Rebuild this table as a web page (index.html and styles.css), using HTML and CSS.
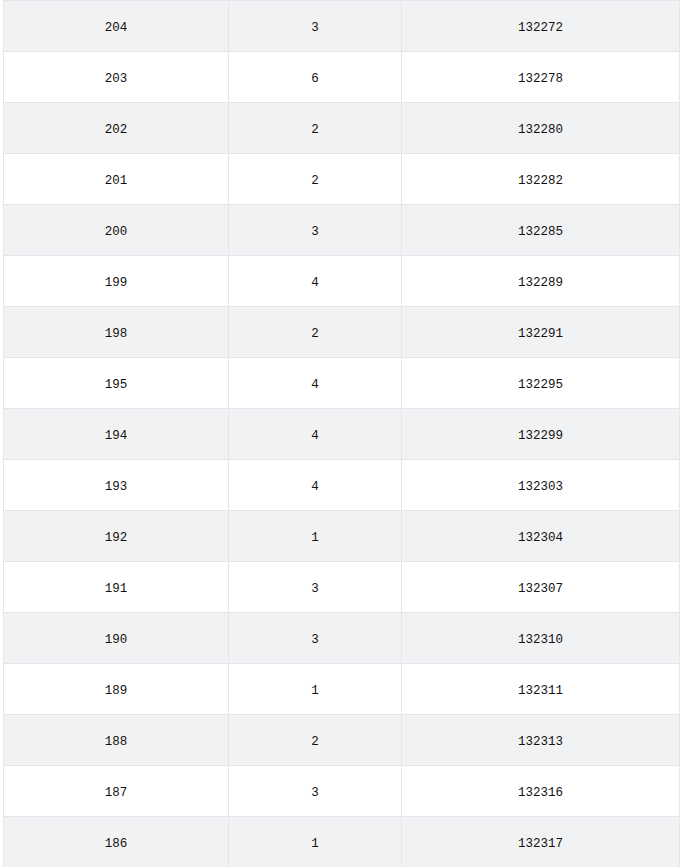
FILE: index.html
```html
<!DOCTYPE html>
<html>
<head>
<meta charset="utf-8">
<link rel="stylesheet" href="styles.css">
</head>
<body>
<div class="table">
  <div class="row"><div class="cell">204</div><div class="cell">3</div><div class="cell">132272</div></div>
  <div class="row"><div class="cell">203</div><div class="cell">6</div><div class="cell">132278</div></div>
  <div class="row"><div class="cell">202</div><div class="cell">2</div><div class="cell">132280</div></div>
  <div class="row"><div class="cell">201</div><div class="cell">2</div><div class="cell">132282</div></div>
  <div class="row"><div class="cell">200</div><div class="cell">3</div><div class="cell">132285</div></div>
  <div class="row"><div class="cell">199</div><div class="cell">4</div><div class="cell">132289</div></div>
  <div class="row"><div class="cell">198</div><div class="cell">2</div><div class="cell">132291</div></div>
  <div class="row"><div class="cell">195</div><div class="cell">4</div><div class="cell">132295</div></div>
  <div class="row"><div class="cell">194</div><div class="cell">4</div><div class="cell">132299</div></div>
  <div class="row"><div class="cell">193</div><div class="cell">4</div><div class="cell">132303</div></div>
  <div class="row"><div class="cell">192</div><div class="cell">1</div><div class="cell">132304</div></div>
  <div class="row"><div class="cell">191</div><div class="cell">3</div><div class="cell">132307</div></div>
  <div class="row"><div class="cell">190</div><div class="cell">3</div><div class="cell">132310</div></div>
  <div class="row"><div class="cell">189</div><div class="cell">1</div><div class="cell">132311</div></div>
  <div class="row"><div class="cell">188</div><div class="cell">2</div><div class="cell">132313</div></div>
  <div class="row"><div class="cell">187</div><div class="cell">3</div><div class="cell">132316</div></div>
  <div class="row"><div class="cell">186</div><div class="cell">1</div><div class="cell">132317</div></div>
</div>
</body>
</html>
```
FILE: styles.css
```css
html, body {
  margin: 0;
  padding: 0;
  background: #ffffff;
}
body {
  padding-left: 3px;
  font-family: "Liberation Mono", "DejaVu Sans Mono", monospace;
  font-size: 12.5px;
  color: #111;
}
.table {
  width: 677px;
  border-left: 1px solid #e4e6ea;
  border-top: 1px solid #e4e6ea;
  box-sizing: border-box;
}
.row {
  display: grid;
  grid-template-columns: 225px 173px 278px;
}
.row:nth-child(odd) {
  background: #f1f2f4;
}
.cell {
  height: 51px;
  box-sizing: border-box;
  padding-top: 3px;
  border-right: 1px solid #e4e6ea;
  border-bottom: 1px solid #e4e6ea;
  display: flex;
  align-items: center;
  justify-content: center;
}
```
